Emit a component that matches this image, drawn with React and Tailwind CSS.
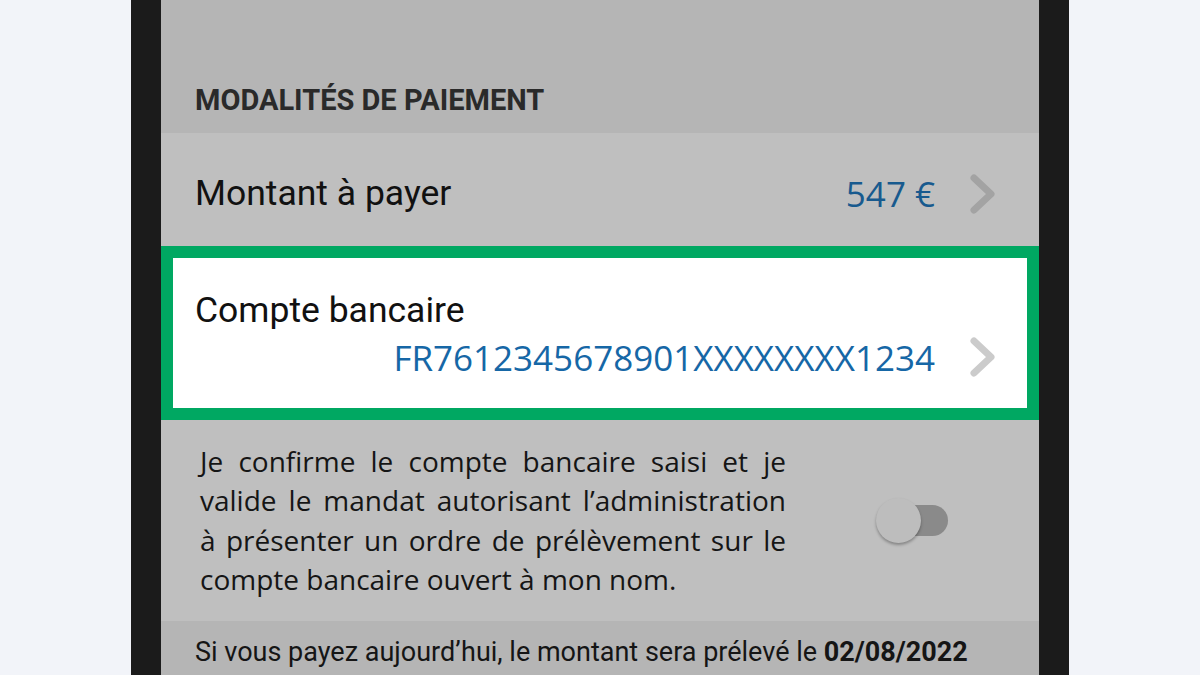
import React from "react";

function Chevron({ color }) {
  return (
    <svg width="26" height="40" viewBox="0 0 26 40" className="shrink-0">
      <polyline points="4,4 21,20 4,36" fill="none" stroke={color} strokeWidth="7" strokeLinecap="round" strokeLinejoin="round" />
    </svg>
  );
}

const lines = [
  "Je confirme le compte bancaire saisi et je",
  "valide le mandat autorisant l’administration",
  "à présenter un ordre de prélèvement sur le",
];

export default function App() {
  return (
    <div className="w-[1200px] h-[675px] overflow-hidden bg-[#f2f4f9] flex justify-center">
      <div className="w-[938px] h-full bg-[#1b1b1b] px-[30px]">
        <div className="h-full flex flex-col bg-[#bfbfbf]">

          {/* section header */}
          <div className="h-[133px] shrink-0 bg-[#b5b5b5] flex items-end pl-[34px] pb-[18px]">
            <h2 className="text-[29px] leading-none font-bold text-[#2a2a2a] font-['Roboto',sans-serif]">
              MODALITÉS DE PAIEMENT
            </h2>
          </div>

          {/* amount */}
          <div className="h-[113px] shrink-0 flex items-center justify-between pl-[34px] pr-[43px] pt-2">
            <span className="text-[35.5px] leading-[41px] text-[#111] font-['Roboto',sans-serif]">Montant à payer</span>
            <div className="flex items-center gap-[35px]">
              <span className="text-[35px] leading-none text-[#185a8e] font-['Open_Sans',sans-serif]">547 €</span>
              <Chevron color="#a3a3a3" />
            </div>
          </div>

          {/* bank account, highlighted */}
          <div className="h-[174px] shrink-0 border-[12px] border-[#00a862] bg-white pl-[22px] pr-[31px] pt-[32px]">
            <div className="text-[35.5px] leading-[41px] text-[#111] font-['Roboto',sans-serif]">Compte bancaire</div>
            <div className="flex items-center justify-end gap-[35px] mt-[6px]">
              <span className="text-[35px] leading-none text-[#1667a6] font-['Open_Sans',sans-serif]">FR7612345678901XXXXXXXX1234</span>
              <Chevron color="#cbcbcb" />
            </div>
          </div>

          {/* mandate toggle */}
          <div className="h-[201px] shrink-0 flex items-center pl-[39px] pr-[91px] justify-between">
            <div className="w-[586px] text-[28px] leading-[39.5px] text-[#151515] font-['Open_Sans',sans-serif]">
              {lines.map((l) => (
                <div key={l} className="text-justify [text-align-last:justify]">{l}</div>
              ))}
              <div>compte bancaire ouvert à mon nom.</div>
            </div>
            <div className="relative w-[72px] h-[46px] flex items-center">
              <div className="absolute left-[6px] right-0 h-[31px] rounded-full bg-[#8a8a8a]" />
              <div className="absolute left-0 w-[45px] h-[45px] rounded-full bg-[#bdbdbd] shadow-[0_2px_3px_rgba(0,0,0,0.3)]" />
            </div>
          </div>

          {/* footer note */}
          <div className="flex-1 bg-[#b5b5b5] pl-[34px] pt-[15px]">
            <p className="text-[27px] leading-[32px] text-[#151515] font-['Roboto',sans-serif]">
              Si vous payez aujourd’hui, le montant sera prélevé le <b className="font-bold">02/08/2022</b>
            </p>
          </div>
        </div>
      </div>
    </div>
  );
}
